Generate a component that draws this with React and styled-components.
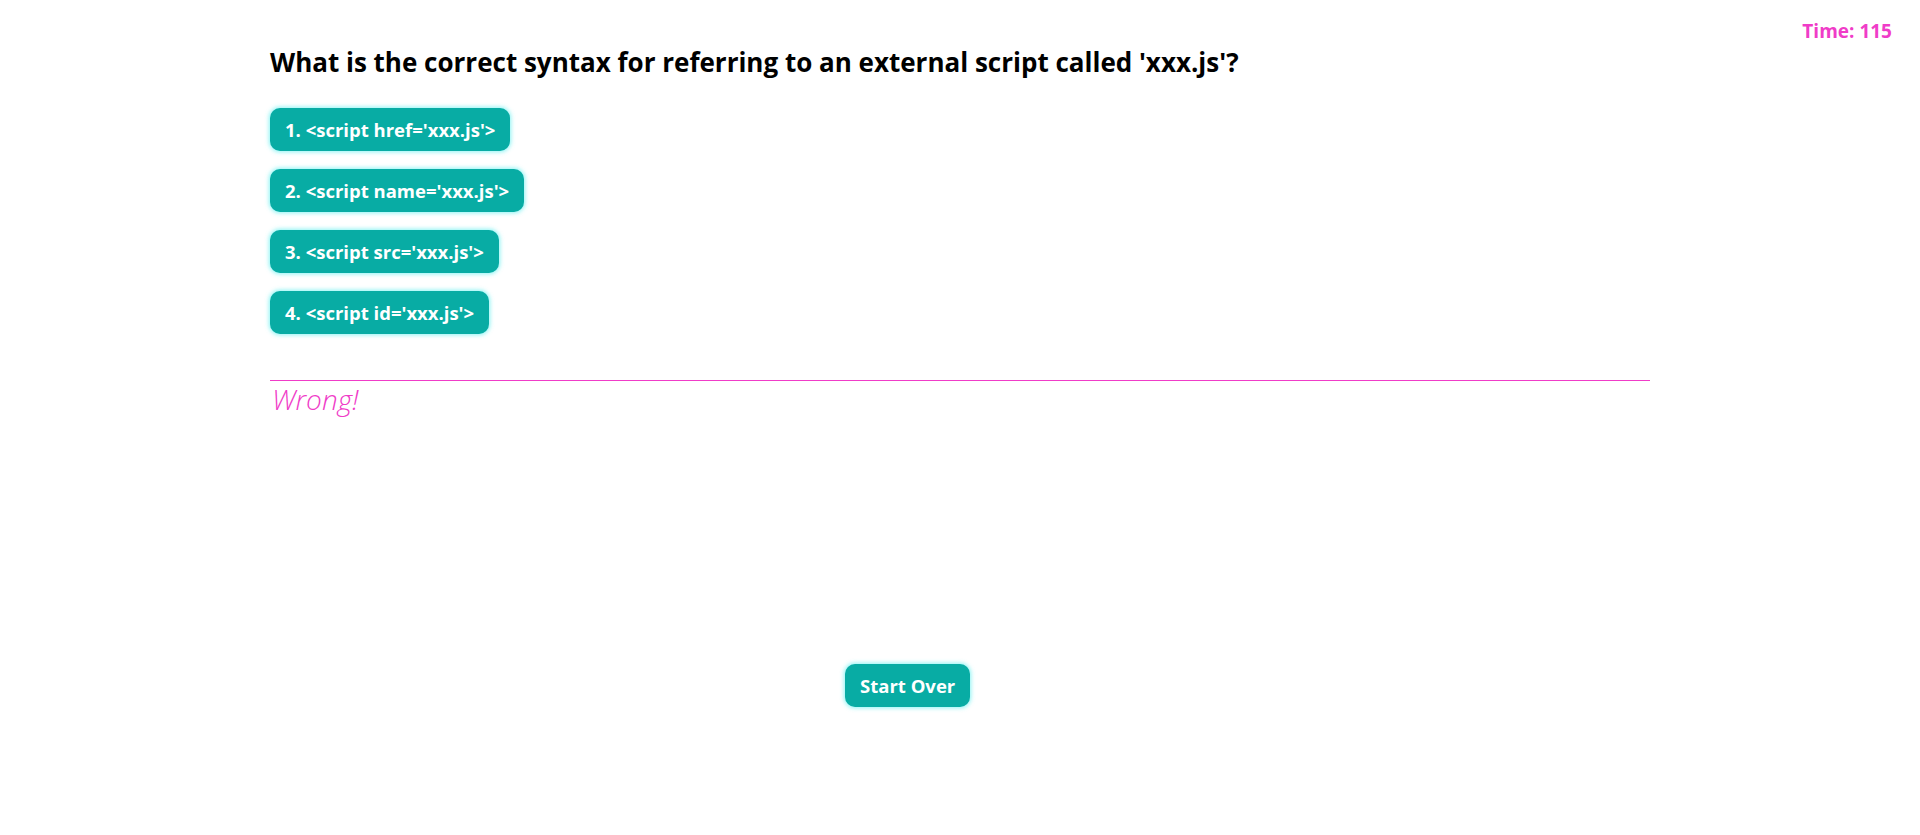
import React from "react";
import styled, { createGlobalStyle } from "styled-components";

const GlobalStyle = createGlobalStyle`
  body {
    margin: 0;
    background: #ffffff;
    font-family: "Open Sans", "Liberation Sans", sans-serif;
  }
`;

const Page = styled.div`
  display: flex;
  flex-direction: column;
  min-height: 835px;
`;

const Header = styled.header`
  display: flex;
  justify-content: flex-end;
  padding: 20px 28px 0;
`;

const Timer = styled.div`
  color: #f03cc8;
  font-size: 19px;
  line-height: 23.5px;
  font-weight: 700;
`;

const Quiz = styled.main`
  width: 1380px;
  margin-left: 270px;
`;

const Question = styled.h2`
  margin: 0 0 28px;
  font-size: 26px;
  font-weight: 700;
  color: #000;
`;

const Choices = styled.div`
  display: flex;
  flex-direction: column;
  align-items: flex-start;
  gap: 18px;
`;

const Button = styled.button`
  height: 43px;
  padding: 0 15px;
  border: none;
  border-radius: 10px;
  background: #08aca4;
  color: #fff;
  font-family: "Open Sans", "Liberation Sans", sans-serif;
  font-size: 18.5px;
  font-weight: 700;
  box-shadow: 0 0 4px 1px rgba(90, 240, 240, 0.7);
  cursor: pointer;
`;

const Result = styled.div`
  margin-top: 46px;
  border-top: 1px solid #f03cc8;
  padding: 4px 0 0 2px;
  color: #f03cc8;
  font-size: 28px;
  font-weight: 300;
  font-style: italic;
  line-height: 1;
`;

const Footer = styled.div`
  margin-top: 251px;
  padding-left: 575px;
`;

const choices = [
  "1. <script href='xxx.js'>",
  "2. <script name='xxx.js'>",
  "3. <script src='xxx.js'>",
  "4. <script id='xxx.js'>",
];

export default function App() {
  return (
    <Page>
      <GlobalStyle />
      <Header>
        <Timer>Time: 115</Timer>
      </Header>
      <Quiz>
        <Question>
          What is the correct syntax for referring to an external script called 'xxx.js'?
        </Question>
        <Choices>
          {choices.map((c) => (
            <Button key={c}>{c}</Button>
          ))}
        </Choices>
        <Result>Wrong!</Result>
        <Footer>
          <Button>Start Over</Button>
        </Footer>
      </Quiz>
    </Page>
  );
}
